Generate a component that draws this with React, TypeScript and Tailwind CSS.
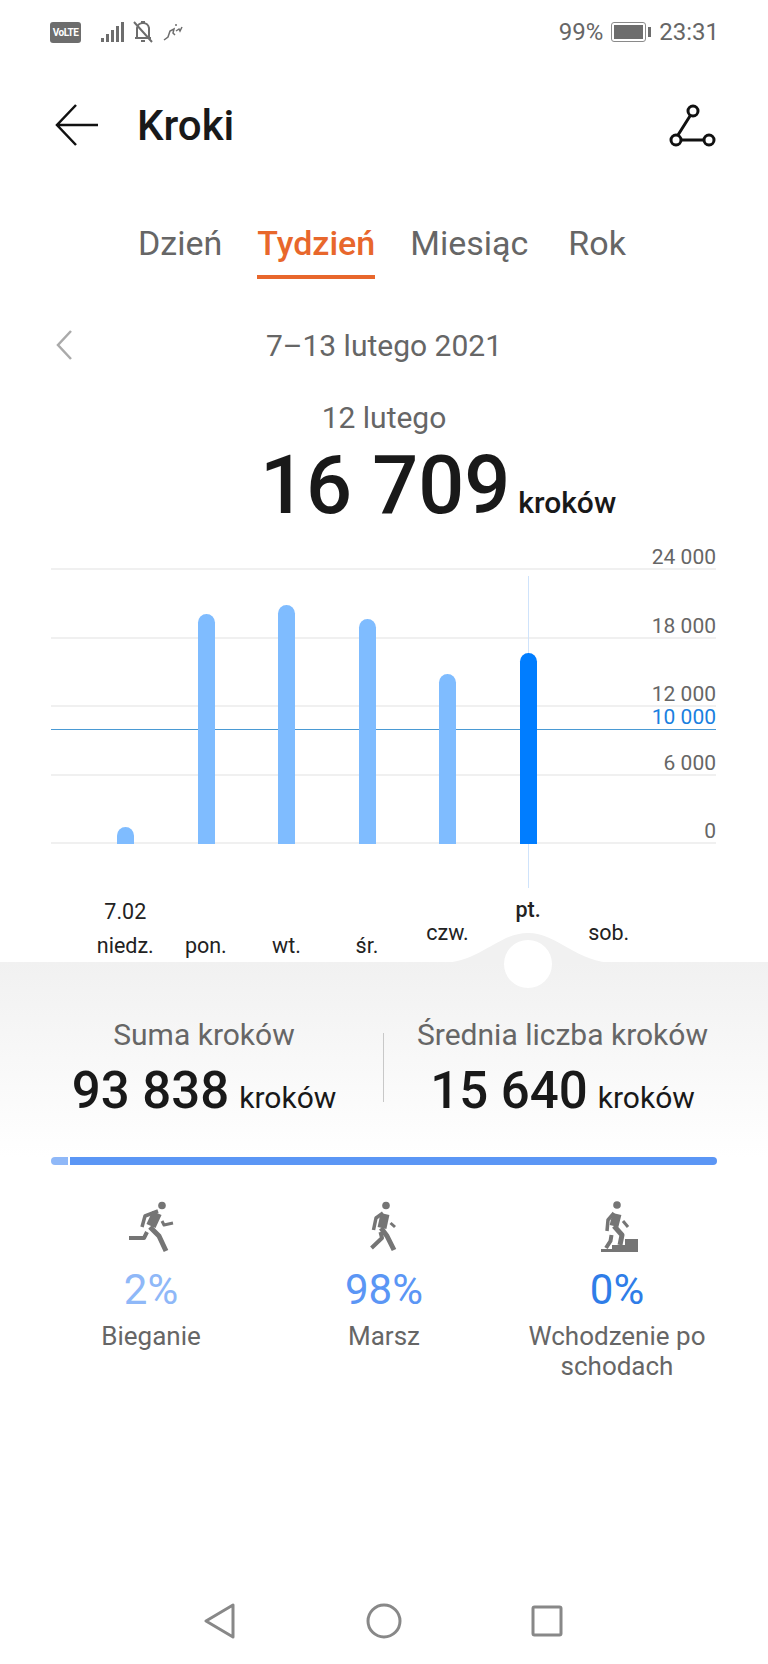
const barTops = [
  { label: "niedz.", height: 17, x: 125 },
  { label: "pon.", height: 230, x: 206 },
  { label: "wt.", height: 239, x: 286 },
  { label: "śr.", height: 225, x: 367 },
  { label: "czw.", height: 170, x: 447 },
  { label: "pt.", height: 191, x: 528 },
];

const Gridline = ({ label }: { label: string }) => (
  <div className="h-[68.5px] border-b-2 border-[#f0f0f0] flex items-end justify-end">
    <span className="text-[21px] leading-[26px] text-[#666666] -mb-[2px]">{label}</span>
  </div>
);

const StatusBar = () => (
  <div className="h-[64px] pl-[50px] pr-[52px] flex items-center justify-between">
    <div className="flex items-center">
      <div className="w-[31px] h-[21px] rounded-[3px] bg-[#6d6d6d] text-white text-[10px] tracking-tighter font-bold leading-[21px] text-center">VoLTE</div>
      <svg className="ml-[20px]" width="24" height="22" viewBox="0 0 24 22" fill="#6d6d6d">
        <rect x="0" y="17" width="3" height="4" />
        <rect x="5" y="13" width="3" height="8" />
        <rect x="10" y="9" width="3" height="12" />
        <rect x="15" y="5" width="3" height="16" />
        <rect x="20" y="1" width="3" height="20" />
      </svg>
      <svg className="ml-[7px]" width="22" height="24" viewBox="0 0 22 24" fill="none" stroke="#6d6d6d" strokeWidth="2">
        <path d="M5 17V8a6 6 0 0 1 6-5 6 6 0 0 1 6 5v9M3 18h16M9 21h4M9 2h4M2 2l18 20" />
      </svg>
      <svg className="ml-[9px]" width="20" height="20" viewBox="0 0 20 20" fill="none" stroke="#6d6d6d" strokeWidth="1.5">
        <path d="M1 18l4-3 2-6 4-2-1 4 2 2M12 3h2M13 9l3-2 1 2 2-4" />
      </svg>
    </div>
    <div className="flex items-center text-[24px] text-[#666666] -mr-[3px]">
      <span>99%</span>
      <div className="ml-[8px] w-[35px] h-[20px] rounded-[3px] border border-[#8a8a8a] p-[2px]">
        <div className="w-full h-full bg-[#6d6d6d]" />
      </div>
      <div className="ml-[2px] w-[3px] h-[10px] bg-[#6d6d6d]" />
      <span className="ml-[8px]">23:31</span>
    </div>
  </div>
);

const RunIcon = () => (
  <svg width="46" height="52" viewBox="0 0 46 52" fill="none" stroke="#757575" strokeLinejoin="round">
    <circle cx="34" cy="4.5" r="3.8" fill="#757575" stroke="none" />
    <path d="M30 10L17 15l-3 11" strokeWidth="3.5" />
    <path d="M29 12L23 25" strokeWidth="10" />
    <path d="M22 26l9 9 7 15" strokeWidth="5" />
    <path d="M19 31l-3 6H1" strokeWidth="4" />
    <path d="M34 20l2 4 9-2" strokeWidth="3" />
  </svg>
);

const WalkIcon = () => (
  <svg width="28" height="52" viewBox="0 0 28 52" fill="none" stroke="#757575" strokeLinejoin="round">
    <circle cx="16" cy="4.5" r="3.8" fill="#757575" stroke="none" />
    <path d="M13 12L6 17 3.5 29" strokeWidth="3.5" />
    <path d="M15 13l-3 14" strokeWidth="9" />
    <path d="M11 27l6 8 7 14" strokeWidth="5" />
    <path d="M10.5 31l1.5 6L1.5 47" strokeWidth="4" />
    <path d="M20.5 22l4.5 4" strokeWidth="3" />
  </svg>
);

const StairsIcon = () => (
  <svg width="37" height="52" viewBox="0 0 37 52" fill="none" stroke="#757575" strokeLinejoin="round">
    <circle cx="16" cy="4" r="3.8" fill="#757575" stroke="none" />
    <path d="M13 12l-6 7-1 11" strokeWidth="3.5" />
    <path d="M16 13l-3 12" strokeWidth="9" />
    <path d="M13 25l8 9-2 10" strokeWidth="5" />
    <path d="M10.5 34l-1 6L5 47" strokeWidth="4" />
    <path d="M22 20l5 6" strokeWidth="3" />
    <path d="M0 51v-3h11v-4h13v-6h13v13z" fill="#757575" stroke="none" />
  </svg>
);

export default function App() {
  return (
    <main className="w-[768px] h-[1664px] bg-white overflow-hidden font-['Roboto',sans-serif]">
      <StatusBar />

      {/* Header */}
      <div className="mt-[2px] h-[118px] pl-[55px] pr-[52px] flex items-center">
        <svg width="44" height="44" viewBox="0 0 44 44" fill="none" stroke="#111111" strokeWidth="2.5">
          <path d="M43 22H2M21 2L2 22l19 20" />
        </svg>
        <h1 className="ml-[38px] text-[42px] font-medium text-[#191919]">Kroki</h1>
        <svg className="ml-auto" width="47" height="43" viewBox="0 0 47 43" fill="none" stroke="#111111" strokeWidth="3">
          <circle cx="24" cy="7" r="5" />
          <circle cx="7" cy="36" r="5" />
          <circle cx="40" cy="36" r="5" />
          <path d="M21 12L9 31M12 36h23" />
        </svg>
      </div>

      {/* Tabs */}
      <div className="mt-[39px] h-[64px] pl-[138px] flex items-start text-[34px] leading-[40px] text-[#666666]">
        <span>Dzień</span>
        <div className="ml-[35px] pb-[12px] border-b-[4px] border-[#e8672c] font-medium text-[#e8672c]">Tydzień</div>
        <span className="ml-[35px]">Miesiąc</span>
        <span className="ml-[40px]">Rok</span>
      </div>

      {/* Date */}
      <div className="mt-[40px] pl-[55px] pr-[266px] flex items-center justify-between h-[36px]">
        <svg width="18" height="32" viewBox="0 0 18 32" fill="none" stroke="#aaaaaa" strokeWidth="2.5">
          <path d="M16 2L3 16l13 14" />
        </svg>
        <span className="text-[30px] text-[#666666]">7–13 lutego 2021</span>
      </div>
      <p className="mt-[37px] text-center text-[30px] leading-[36px] text-[#666666]">12 lutego</p>
      <div className="mt-[8px] pl-[260px] flex items-baseline h-[84px]">
        <span className="text-[81px] leading-[84px] font-medium text-[#191919]">16 709</span>
        <span className="ml-[8px] text-[30px] font-medium text-[#191919]">kroków</span>
      </div>

      {/* Chart */}
      <div className="relative mt-[14px] mx-[51px] w-[665px]">
        <div className="h-[28px] border-b-2 border-[#f0f0f0] flex items-end justify-end">
          <span className="text-[21px] leading-[26px] text-[#666666] -mb-[2px]">24 000</span>
        </div>
        <Gridline label="18 000" />
        <Gridline label="12 000" />
        <Gridline label="6 000" />
        <Gridline label="0" />
        <div className="absolute left-0 right-0 top-[187px] h-[1px] bg-[#4a9ad4]" />
        <span className="absolute right-0 top-[162px] text-[21px] leading-[26px] text-[#1a7fe0]">10 000</span>
        <div className="absolute left-[477px] top-[34px] w-[1px] h-[312px] bg-[#cfe3fb]" />
        {barTops.map((bar) => (
          <div
            key={bar.label}
            className={bar.label === "pt." ? "absolute w-[17px] rounded-t-full bg-[#007dff]" : "absolute w-[17px] rounded-t-full bg-[#7fbcff]"}
            style={{ left: bar.x - 51 - 8, top: 302 - bar.height, height: bar.height }}
          />
        ))}
      </div>

      {/* X axis */}
      <div className="mt-[45px] ml-[85px] w-[564px] h-[73px] grid grid-cols-7 text-center text-[21.5px] leading-[26px] text-[#222222]">
        <div className="flex flex-col items-center justify-end pb-[3px]">
          <span className="mb-[8px]">7.02</span>
          <span>niedz.</span>
        </div>
        <div className="flex items-end justify-center pb-[3px]">pon.</div>
        <div className="flex items-end justify-center pb-[3px]">wt.</div>
        <div className="flex items-end justify-center pb-[3px]">śr.</div>
        <div className="flex items-end justify-center pb-[16px]">czw.</div>
        <div className="flex items-end justify-center pb-[39px] font-medium">pt.</div>
        <div className="flex items-end justify-center pb-[16px]">sob.</div>
      </div>

      {/* Gray panel */}
      <section className="relative h-[195px] bg-gradient-to-b from-[#f1f1f1] to-white">
        <svg className="absolute left-[440px] -top-[29px]" width="176" height="30" viewBox="0 0 176 30" fill="#f1f1f1">
          <path d="M0 30 C40 30 58 0 88 0 C118 0 136 30 176 30 Z" />
        </svg>
        <div className="absolute left-[504px] -top-[22px] w-[48px] h-[48px] rounded-full bg-white" />

        <div className="pt-[55px] px-[51px] flex items-start">
          <div className="w-[306px] flex flex-col items-center">
            <span className="text-[30px] leading-[36px] text-[#666666] whitespace-nowrap">Suma kroków</span>
            <div className="mt-[8px] flex items-baseline whitespace-nowrap">
              <span className="text-[51px] leading-[60px] font-medium text-[#191919]">93 838</span>
              <span className="ml-[10px] text-[30px] text-[#191919]">kroków</span>
            </div>
          </div>
          <div className="ml-[26px] mt-[16px] w-[1px] h-[69px] bg-[#c8c8c8]" />
          <div className="ml-[24px] flex-1 flex flex-col items-center">
            <span className="text-[30px] leading-[36px] text-[#666666] whitespace-nowrap">Średnia liczba kroków</span>
            <div className="mt-[8px] flex items-baseline whitespace-nowrap">
              <span className="text-[51px] leading-[60px] font-medium text-[#191919]">15 640</span>
              <span className="ml-[10px] text-[30px] text-[#191919]">kroków</span>
            </div>
          </div>
        </div>
      </section>

      {/* Split bar */}
      <div className="mx-[51px] h-[8px] flex gap-[2px] rounded-full overflow-hidden">
        <div className="w-[17px] bg-[#8fb8f8]" />
        <div className="flex-1 bg-[#5b96f5]" />
      </div>

      {/* Activity types */}
      <div className="mt-[36px] px-[51px] grid grid-cols-3 text-center">
        <div className="flex flex-col items-center -ml-[22px]">
          <div className="h-[52px] flex items-center"><RunIcon /></div>
          <span className="mt-[12px] text-[42px] leading-[50px] text-[#8fb8f8]">2%</span>
          <span className="mt-[6px] text-[26px] leading-[30px] text-[#666666]">Bieganie</span>
        </div>
        <div className="flex flex-col items-center">
          <div className="h-[52px] flex items-center"><WalkIcon /></div>
          <span className="mt-[12px] text-[42px] leading-[50px] text-[#5b96f5]">98%</span>
          <span className="mt-[6px] text-[26px] leading-[30px] text-[#666666]">Marsz</span>
        </div>
        <div className="flex flex-col items-center ml-[22px]">
          <div className="h-[52px] flex items-center pl-[4px]"><StairsIcon /></div>
          <span className="mt-[12px] text-[42px] leading-[50px] text-[#2f7de8]">0%</span>
          <span className="mt-[6px] text-[26px] leading-[30px] text-[#666666] whitespace-nowrap">Wchodzenie po</span>
          <span className="text-[26px] leading-[30px] text-[#666666]">schodach</span>
        </div>
      </div>

      {/* Nav bar */}
      <div className="mt-[222px] pl-[204px] flex items-center h-[36px]">
        <svg width="32" height="36" viewBox="0 0 32 36" fill="none" stroke="#888888" strokeWidth="3" strokeLinejoin="round">
          <path d="M2 18L29 2v32z" />
        </svg>
        <svg className="ml-[130px]" width="36" height="36" viewBox="0 0 36 36" fill="none" stroke="#888888" strokeWidth="3">
          <circle cx="18" cy="18" r="16" />
        </svg>
        <svg className="ml-[129px]" width="32" height="32" viewBox="0 0 32 32" fill="none" stroke="#888888" strokeWidth="3" strokeLinejoin="round">
          <rect x="2" y="2" width="28" height="28" rx="1.5" />
        </svg>
      </div>
    </main>
  );
}
